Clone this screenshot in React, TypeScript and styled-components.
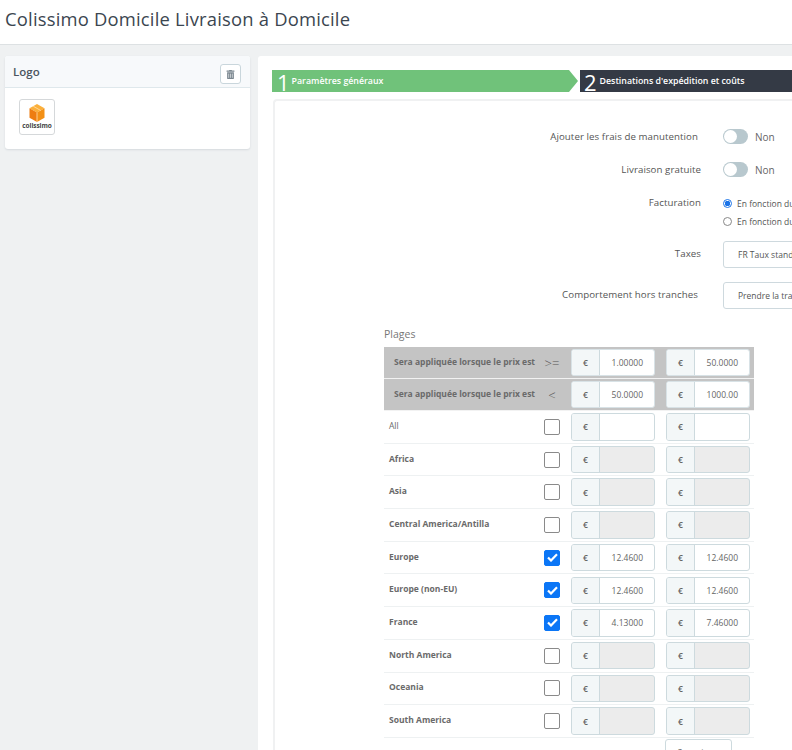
import { FaTrashAlt } from 'react-icons/fa';
import styled, { createGlobalStyle } from 'styled-components';

type Zone = { name: string; bold?: boolean; checked?: boolean; min?: string; max?: string; disabled?: boolean };

const zones: Zone[] = [
  { name: 'All' },
  { name: 'Africa', bold: true, disabled: true },
  { name: 'Asia', bold: true, disabled: true },
  { name: 'Central America/Antilla', bold: true, disabled: true },
  { name: 'Europe', bold: true, checked: true, min: '12.4600', max: '12.4600' },
  { name: 'Europe (non-EU)', bold: true, checked: true, min: '12.4600', max: '12.4600' },
  { name: 'France', bold: true, checked: true, min: '4.13000', max: '7.46000' },
  { name: 'North America', bold: true, disabled: true },
  { name: 'Oceania', bold: true, disabled: true },
  { name: 'South America', bold: true, disabled: true },
];

const GlobalStyle = createGlobalStyle`
  html, body {
    margin: 0;
    height: 750px;
    overflow: hidden;
    background: #eff1f2;
    font-family: "Open Sans", "Liberation Sans", sans-serif;
    color: #555;
  }
`;

const Page = styled.div`
  width: 792px;
  height: 750px;
  overflow: hidden;
`;

const Header = styled.header`
  height: 45px;
  box-sizing: border-box;
  padding: 6px 0 0 5px;
  background: #fff;
  border-bottom: 1px solid #dde1e3;
`;

const Title = styled.h1`
  margin: 0;
  font-size: 18.4px;
  line-height: 26px;
  font-weight: 400;
  letter-spacing: 0.2px;
  color: #3b4650;
`;

const Body = styled.div`
  display: flex;
  gap: 8px;
  padding: 11px 0 0 5px;
`;

const LogoCard = styled.section`
  width: 245px;
  height: 93px;
  flex: none;
  box-sizing: border-box;
  background: #fff;
  border-radius: 3px;
  box-shadow: 0 1px 2px #d5dadd;
`;

const LogoCardHead = styled.div`
  height: 31px;
  display: flex;
  align-items: center;
  justify-content: space-between;
  padding: 0 9px 0 8px;
  background: #f7f9fb;
  border-bottom: 1px solid #dfe8ec;
  border-radius: 3px 3px 0 0;
  font-size: 11.5px;
  font-weight: 600;
  color: #4b5560;
`;

const IconButton = styled.button`
  width: 21px;
  height: 20px;
  margin-top: 5px;
  padding: 0;
  display: flex;
  align-items: center;
  justify-content: center;
  background: #fff;
  border: 1px solid #c9d6dc;
  border-radius: 3px;
  color: #7b8790;
  font-size: 9px;
`;

const LogoThumb = styled.div`
  width: 36px;
  height: 36px;
  margin: 11px 0 0 14px;
  display: flex;
  flex-direction: column;
  align-items: center;
  justify-content: flex-start;
  padding-top: 4px;
  box-sizing: border-box;
  background: #fff;
  border: 1px solid #d5d8da;
  border-radius: 3px;
`;

const LogoWord = styled.span`
  font-size: 6.5px;
  line-height: 8px;
  font-weight: 700;
  color: #444;
  letter-spacing: -0.1px;
`;

const MainCard = styled.main`
  width: 560px;
  height: 720px;
  flex: none;
  box-sizing: border-box;
  padding: 14px 0 0 14px;
  background: #fff;
  border-radius: 3px 0 0 0;
`;

const Steps = styled.div`
  display: flex;
  gap: 2px;
  width: 560px;
  height: 22px;
`;

const GreenStep = styled.div`
  width: 306px;
  flex: none;
  display: flex;
  align-items: center;
  gap: 2px;
  padding-left: 5px;
  box-sizing: border-box;
  background: #70c27a;
  color: #fff;
  clip-path: polygon(0 0, 297px 0, 100% 50%, 297px 100%, 0 100%);
`;

const DarkStep = styled.div`
  flex: 1;
  display: flex;
  align-items: center;
  gap: 3px;
  padding-left: 4px;
  background: #343a45;
  color: #fff;
`;

const StepNumber = styled.span`
  font-size: 22px;
  line-height: 22px;
  font-weight: 400;
  padding-top: 2px;
`;

const StepLabel = styled.span`
  font-size: 8.8px;
  font-weight: 600;
  white-space: nowrap;
`;

const FormPanel = styled.div`
  margin-top: 7px;
  margin-left: 1px;
  width: 560px;
  height: 680px;
  box-sizing: border-box;
  padding-top: 28px;
  border: 2px solid #f0f1f2;
  border-right: none;
  border-radius: 4px 0 0 0;
`;

const FieldRow = styled.div<{ $height: number }>`
  display: grid;
  grid-template-columns: 426px 1fr;
  column-gap: 22px;
  height: ${({ $height }) => $height}px;
  overflow: hidden;
`;

const FieldLabel = styled.div<{ $inset?: number; $top?: number }>`
  text-align: right;
  font-size: 9.7px;
  line-height: 14px;
  letter-spacing: 0.07px;
  color: #555;
  padding-top: ${({ $top }) => $top ?? 1}px;
  padding-right: ${({ $inset }) => $inset ?? 0}px;
`;

const ToggleWrap = styled.div`
  display: flex;
  align-items: center;
  gap: 7px;
  height: 15px;
  font-size: 10px;
  color: #666;
`;

const Toggle = styled.span`
  width: 25px;
  height: 15px;
  border-radius: 8px;
  background: #b8c8ce;
  position: relative;

  &:after {
    content: '';
    position: absolute;
    left: 1px;
    top: 1px;
    width: 13px;
    height: 13px;
    border-radius: 50%;
    background: #fff;
  }
`;

const RadioList = styled.div`
  display: flex;
  flex-direction: column;
  gap: 4px;
  padding-top: 1px;
`;

const RadioRow = styled.div`
  display: flex;
  align-items: center;
  gap: 5px;
  height: 14px;
  font-size: 8.5px;
  color: #555;
  white-space: nowrap;
`;

const RadioDot = styled.span<{ $on?: boolean }>`
  width: 9px;
  height: 9px;
  box-sizing: border-box;
  border-radius: 50%;
  flex: none;
  border: ${({ $on }) => ($on ? '1px solid #1a73e8' : '1px solid #888')};
  background: ${({ $on }) => ($on ? 'radial-gradient(circle, #1a73e8 0 2.6px, #fff 3px)' : '#fff')};
`;

const SelectBox = styled.div`
  width: 120px;
  height: 27px;
  box-sizing: border-box;
  display: flex;
  align-items: center;
  padding-left: 14px;
  border: 1px solid #ced9de;
  border-radius: 3px;
  font-size: 8.5px;
  color: #555;
  white-space: nowrap;
`;

const Ranges = styled.div`
  margin-left: 109px;
  width: 370px;
`;

const RangesTitle = styled.div`
  font-size: 10.5px;
  line-height: 14px;
  color: #777;
  margin: 0 0 6px;
`;

const RangeRow = styled.div<{ $head?: boolean }>`
  display: grid;
  grid-template-columns: 160px 27px 95px 84px;
  align-items: center;
  height: ${({ $head }) => ($head ? '32px' : '32.7px')};
  box-sizing: border-box;
  background: ${({ $head }) => ($head ? '#c4c4c4' : '#fff')};
  border-bottom: 1px solid ${({ $head }) => ($head ? '#f2f2f2' : '#eef1f2')};
`;

const RowLabel = styled.div<{ $bold?: boolean }>`
  padding: 0 0 3px 5px;
  font-size: 8.5px;
  font-weight: ${({ $bold }) => ($bold ? 700 : 400)};
  color: #6a6a6a;
  white-space: nowrap;
`;

const HeadLabel = styled.div`
  padding-left: 10px;
  padding-bottom: 3px;
  font-size: 8.5px;
  font-weight: 700;
  color: #6a6a6a;
  white-space: nowrap;
`;

const Operator = styled.div`
  text-align: center;
  font-size: 13px;
  font-weight: 300;
  color: #555;
  padding-right: 11px;
`;

const CheckBox = styled.span<{ $on?: boolean }>`
  width: 16px;
  height: 16px;
  box-sizing: border-box;
  display: flex;
  align-items: center;
  justify-content: center;
  border-radius: 2px;
  background: ${({ $on }) => ($on ? '#0b76f6' : '#fff')};
  border: 1px solid ${({ $on }) => ($on ? '#0b76f6' : '#8a8a8a')};
`;

const PriceInput = styled.div<{ $flat?: boolean; $disabled?: boolean }>`
  width: 84px;
  height: 27.5px;
  box-sizing: border-box;
  display: grid;
  grid-template-columns: 28px 1fr;
  border: 1px solid ${({ $flat }) => ($flat ? '#d8e2e6' : '#cddade')};
  border-radius: 3px;
  overflow: hidden;
  background: ${({ $disabled }) => ($disabled ? '#ececec' : '#fff')};
`;

const Currency = styled.span`
  display: flex;
  align-items: center;
  justify-content: center;
  background: #f3f7f8;
  border-right: 1px solid #cddade;
  font-size: 8.5px;
  font-weight: 600;
  color: #666;
`;

const PriceValue = styled.span`
  display: flex;
  align-items: center;
  justify-content: flex-end;
  padding-right: 11px;
  font-size: 8.5px;
  color: #666;
`;

const DeleteRow = styled.div`
  padding: 1px 0 0 281px;
`;

const DeleteButton = styled.button`
  width: 67px;
  height: 27px;
  padding: 0;
  background: #fff;
  border: 1px solid #cddade;
  border-radius: 3px;
  font: 400 8.5px "Open Sans", sans-serif;
  color: #666;
`;

const Price = ({ value, disabled, flat }: { value?: string; disabled?: boolean; flat?: boolean }) => (
  <PriceInput $disabled={disabled} $flat={flat}>
    <Currency>€</Currency>
    <PriceValue>{value}</PriceValue>
  </PriceInput>
);

const ColissimoBox = () => (
  <svg width="16" height="18" viewBox="0 0 16 18">
    <path d="M8 0 15.5 4.3 8 8.6.5 4.3Z" fill="#fbb03b" />
    <path d="M.5 4.3 8 8.6V18L.5 13.7Z" fill="#ee7d11" />
    <path d="M15.5 4.3 8 8.6V18l7.5-4.3Z" fill="#f39015" />
    <path d="M8 8.6V18M4.2 2.2l7.5 4.3" stroke="#ffe0b0" strokeWidth="0.8" fill="none" />
  </svg>
);

const Tick = () => (
  <svg width="11" height="9" viewBox="0 0 11 9">
    <path d="M1 4.5 4 7.5 10 1.2" stroke="#fff" strokeWidth="2.2" fill="none" />
  </svg>
);

export default function App() {
  return (
    <Page>
      <GlobalStyle />
      <Header>
        <Title>Colissimo Domicile Livraison à Domicile</Title>
      </Header>
      <Body>
        <LogoCard>
          <LogoCardHead>
            Logo
            <IconButton aria-label="Supprimer">
              <FaTrashAlt />
            </IconButton>
          </LogoCardHead>
          <LogoThumb>
            <ColissimoBox />
            <LogoWord>colissimo</LogoWord>
          </LogoThumb>
        </LogoCard>
        <MainCard>
          <Steps>
            <GreenStep>
              <StepNumber>1</StepNumber>
              <StepLabel>Paramètres généraux</StepLabel>
            </GreenStep>
            <DarkStep>
              <StepNumber>2</StepNumber>
              <StepLabel>Destinations d'expédition et coûts</StepLabel>
            </DarkStep>
          </Steps>
          <FormPanel>
            <FieldRow $height={33}>
              <FieldLabel $inset={3}>Ajouter les frais de manutention</FieldLabel>
              <ToggleWrap>
                <Toggle />
                Non
              </ToggleWrap>
            </FieldRow>
            <FieldRow $height={33}>
              <FieldLabel>Livraison gratuite</FieldLabel>
              <ToggleWrap>
                <Toggle />
                Non
              </ToggleWrap>
            </FieldRow>
            <FieldRow $height={46}>
              <FieldLabel>Facturation</FieldLabel>
              <RadioList>
                <RadioRow>
                  <RadioDot $on />
                  En fonction du poids total
                </RadioRow>
                <RadioRow>
                  <RadioDot />
                  En fonction du prix total
                </RadioRow>
              </RadioList>
            </FieldRow>
            <FieldRow $height={41}>
              <FieldLabel $top={6}>Taxes</FieldLabel>
              <SelectBox>FR Taux standard (20%)</SelectBox>
            </FieldRow>
            <FieldRow $height={45}>
              <FieldLabel $inset={3} $top={6}>
                Comportement hors tranches
              </FieldLabel>
              <SelectBox>Prendre la tranche la plus haute</SelectBox>
            </FieldRow>
            <Ranges>
              <RangesTitle>Plages</RangesTitle>
              <RangeRow $head>
                <HeadLabel>Sera appliquée lorsque le prix est</HeadLabel>
                <Operator>&gt;=</Operator>
                <Price value="1.00000" flat />
                <Price value="50.0000" flat />
              </RangeRow>
              <RangeRow $head>
                <HeadLabel>Sera appliquée lorsque le prix est</HeadLabel>
                <Operator>&lt;</Operator>
                <Price value="50.0000" flat />
                <Price value="1000.00" flat />
              </RangeRow>
              {zones.map((zone) => (
                <RangeRow key={zone.name}>
                  <RowLabel $bold={zone.bold}>{zone.name}</RowLabel>
                  <CheckBox $on={zone.checked}>{zone.checked && <Tick />}</CheckBox>
                  <Price value={zone.min} disabled={zone.disabled} />
                  <Price value={zone.max} disabled={zone.disabled} />
                </RangeRow>
              ))}
              <DeleteRow>
                <DeleteButton>Supprimer</DeleteButton>
              </DeleteRow>
            </Ranges>
          </FormPanel>
        </MainCard>
      </Body>
    </Page>
  );
}
